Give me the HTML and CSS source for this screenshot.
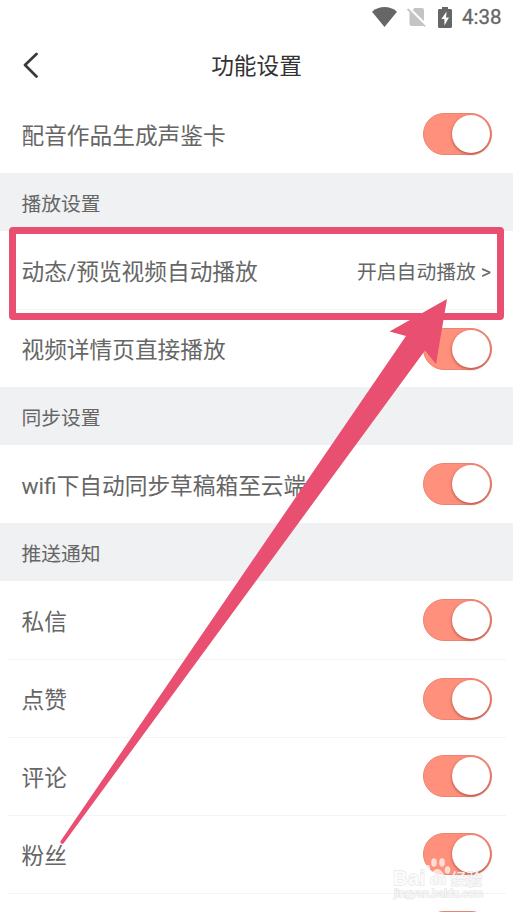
FILE: index.html
```html
<!DOCTYPE html>
<html lang="zh-CN">
<head>
    <meta charset="UTF-8">
    <meta name="viewport" content="width=device-width, initial-scale=1.0">
    <title>功能设置</title>
    <link rel="stylesheet" href="styles.css">
</head>
<body>
<div class="screen">
    <div class="status-bar">
        <svg class="icon-wifi" width="25" height="20" viewBox="0 0 25 20">
            <path d="M0 4.7C7-1.5 18-1.5 25 4.7L12.5 20Z" fill="#666"/>
        </svg>
        <svg class="icon-sim" width="19" height="20" viewBox="0 0 19 20">
            <path d="M7.5 1H15q2 0 2 2v14.5q0 1.5-1.5 1.5h-11Q2.5 19 2.5 17V6.2Z" fill="#c4c4c4"/>
            <path d="M1 .7 19 18.7" stroke="#fff" stroke-width="3.4"/>
            <path d="M.6 2 18 19.4" stroke="#c4c4c4" stroke-width="1.8"/>
        </svg>
        <svg class="icon-battery" width="14" height="21" viewBox="0 0 14 21">
            <path d="M4 0h6v2h2.6Q14 2 14 3.4v16Q14 21 12.6 21H1.4Q0 21 0 19.4v-16Q0 2 1.4 2H4Z" fill="#666"/>
            <path d="M8.6 4.5 3.4 12h3v6.500l4.600-8h-3Z" fill="#fff"/>
        </svg>
        <span class="time">4:38</span>
    </div>

    <header class="header">
        <svg class="back" width="16" height="28" viewBox="0 0 16 28">
            <path d="M14.5 3 3 14l11.500 11.500" fill="none" stroke="#3a3a3a" stroke-width="2.700" stroke-linecap="round" stroke-linejoin="round"/>
        </svg>
        <h1>功能设置</h1>
    </header>

    <main class="settings">
        <div class="row">
            <span>配音作品生成声鉴卡</span>
            <div class="switch"></div>
        </div>

        <h2>播放设置</h2>
        <div class="row">
            <span>动态/预览视频自动播放</span>
            <span class="value">开启自动播放 &gt;</span>
        </div>
        <div class="row">
            <span>视频详情页直接播放</span>
            <div class="switch"></div>
        </div>

        <h2>同步设置</h2>
        <div class="row">
            <span>wifi下自动同步草稿箱至云端</span>
            <div class="switch"></div>
        </div>

        <h2>推送通知</h2>
        <div class="row">
            <span>私信</span>
            <div class="switch"></div>
        </div>
        <div class="row">
            <span>点赞</span>
            <div class="switch"></div>
        </div>
        <div class="row">
            <span>评论</span>
            <div class="switch"></div>
        </div>
        <div class="row">
            <span>粉丝</span>
            <div class="switch"></div>
        </div>
        <div class="row">
            <div class="switch"></div>
        </div>
    </main>

    <!-- marks drawn over the settings list -->
    <div class="highlight"></div>
    <svg class="arrow" width="513" height="912" viewBox="0 0 513 912">
        <path d="M447 299 389.5 331.5 406 336 60.3 841.5Q60.500 845 63.500 843.500L425 350.500 436 364Z" fill="#e84f70"/>
    </svg>

    <svg class="watermark" width="100" height="48" viewBox="0 0 100 48">
        <g class="paw">
            <ellipse cx="41" cy="5.500" rx="2.800" ry="4.300"/>
            <ellipse cx="49" cy="5.500" rx="2.800" ry="4.300"/>
            <ellipse cx="34.500" cy="11.500" rx="2.800" ry="3.800"/>
            <ellipse cx="54.500" cy="13" rx="2.800" ry="3.800"/>
            <path d="M44.500 12c4 0 5 4 8 7s4 9-2 9H38c-6 0-6-6-2-9s4-7 8.500-7Z"/>
        </g>
        <text class="brand" x="0" y="28" textLength="32">Bai</text>
        <text class="du" x="37" y="27">du</text>
        <text class="brand-cn" x="58" y="28" textLength="31">经验</text>
        <text class="url" x="1" y="40" textLength="89">jingyan.baidu.com</text>
    </svg>
</div>
</body>
</html>
```

FILE: styles.css
```css
:root {
    --text-color: #666;
    --band-color: #f0f1f3;
    --switch-color: #ff907c;
    --mark-color: #e84f70;
}

* {
    margin: 0;
    padding: 0;
    box-sizing: border-box;
}

body {
    background-color: #fff;
    color: var(--text-color);
    font-family: Roboto, "Noto Sans CJK SC", sans-serif;
}

.screen {
    position: relative;
    height: 912px;
    overflow: hidden;
}

.status-bar {
    display: flex;
    justify-content: flex-end;
    align-items: center;
    height: 34px;
    padding-right: 12px;
}

.icon-sim {
    margin-left: 10px;
}

.icon-battery {
    margin-left: 12px;
}

.time {
    width: 39px;
    margin-left: 10px;
    font-size: 20.5px;
    font-weight: 400;
    -webkit-text-stroke: 0.3px var(--text-color);
    white-space: nowrap;
}

.header {
    display: grid;
    grid-template-columns: 60px 1fr 60px;
    align-items: center;
    height: 61.4px;
}

.back {
    margin-left: 22px;
}

h1 {
    color: #333;
    font-size: 22.7px;
    font-weight: 400;
    text-align: center;
}

h2 {
    display: flex;
    align-items: center;
    height: 58.3px;
    padding: 0 21.5px;
    background-color: var(--band-color);
    font-size: 19.8px;
    font-weight: 400;
}

.row {
    display: flex;
    justify-content: space-between;
    align-items: center;
    height: 77.8px;
    margin: 0 7px;
    padding: 0 14px 0 14.5px;
    font-size: 22.7px;
    white-space: nowrap;
}

.row + .row {
    border-top: 1px solid #f4f4f5;
}

.value {
    padding-right: 1px;
    font-size: 19.8px;
}

.switch {
    display: flex;
    justify-content: flex-end;
    align-items: center;
    width: 69px;
    height: 42px;
    margin-left: auto;
    padding-right: 1px;
    border: 1px solid #ec8472;
    border-radius: 21px;
    background-color: var(--switch-color);
}

.switch::after {
    content: "";
    width: 38px;
    height: 38px;
    border-radius: 50%;
    background-color: #fff;
    box-shadow: 0 1px 3px rgba(120, 20, 10, 0.6);
}

.highlight {
    position: absolute;
    top: 227px;
    left: 9px;
    width: 495px;
    height: 93px;
    border: 7px solid var(--mark-color);
    border-radius: 4px;
}

.arrow {
    position: absolute;
    top: 0;
    left: 0;
}

.watermark {
    position: absolute;
    top: 857px;
    left: 393px;
    overflow: visible;
    fill: rgba(255, 255, 255, 0.8);
    stroke: rgba(190, 190, 190, 0.35);
    stroke-width: 1.4px;
    paint-order: stroke;
    font-family: "Liberation Sans", "Noto Sans CJK SC", sans-serif;
}

.paw {
    stroke: none;
    fill: rgba(255, 255, 255, 0.7);
}

.brand {
    font-size: 20px;
    font-weight: 700;
}

.du {
    font-size: 13px;
    font-weight: 700;
}

.brand-cn {
    font-size: 15.5px;
    font-weight: 500;
}

.url {
    font-size: 11px;
}
```
